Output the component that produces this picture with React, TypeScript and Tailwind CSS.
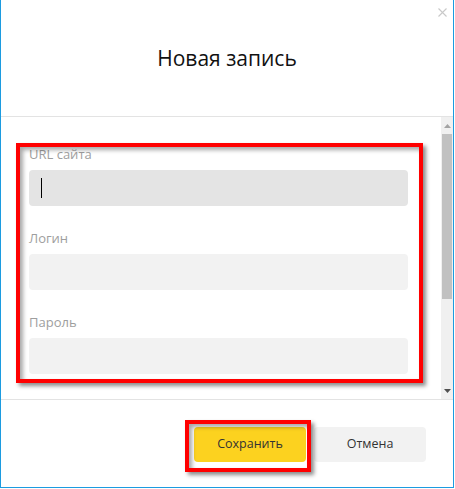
import React from "react";

const font = { fontFamily: '"Open Sans", "Noto Sans", sans-serif' };

function Field({ label, focused }: { label: string; focused?: boolean }) {
  return (
    <div className="flex flex-col">
      <div className="text-[13px] leading-[20px] text-[#9e9e9e] h-[20px]">{label}</div>
      <div
        className={
          "mt-[6px] h-[36px] w-[379px] rounded-[4px] relative " +
          (focused ? "bg-[#e4e4e4]" : "bg-[#f2f2f2]")
        }
      >
        {focused && <div className="absolute left-[12px] top-[8px] w-[1px] h-[20px] bg-black" />}
      </div>
    </div>
  );
}

export default function App() {
  return (
    <div className="relative w-[455px] h-[489px] bg-white" style={font}>
      <div className="w-[454px] h-[488px] border-l border-r border-b border-[#1c9be0] flex flex-col">
        <div className="relative h-[117px] flex items-center justify-center border-b border-[#e3e3e3] shrink-0">
          <div className="text-[21px] text-[#111] leading-none">Новая запись</div>
          <svg className="absolute right-[6px] top-[8px]" width="9" height="9" viewBox="0 0 9 9">
            <path d="M0.5 0.5 L8.5 8.5 M8.5 0.5 L0.5 8.5" stroke="#c9c9c9" strokeWidth="1.1" />
          </svg>
        </div>
        <div className="flex h-[283px] shrink-0 border-b border-[#e3e3e3]">
          <div className="flex-1 overflow-hidden pl-[28px] pt-[27px] flex flex-col gap-[22px]">
            <Field label="URL сайта" focused />
            <Field label="Логин" />
            <Field label="Пароль" />
          </div>
          <div className="w-[12px] bg-[#f0f0f0] flex flex-col">
            <div className="h-[17px] flex items-center justify-center">
              <svg width="7" height="4" viewBox="0 0 7 4">
                <path d="M0 4 L3.5 0 L7 4 Z" fill="#a3a3a3" />
              </svg>
            </div>
            <div className="h-[165px] mx-[1px] bg-[#c1c1c1]" />
            <div className="flex-1" />
            <div className="h-[17px] flex items-center justify-center">
              <svg width="7" height="4" viewBox="0 0 7 4">
                <path d="M0 0 L7 0 L3.5 4 Z" fill="#505050" />
              </svg>
            </div>
          </div>
        </div>
        <div className="flex-1 flex justify-end items-start pt-[27px] pr-[27px] gap-[8px]">
          <button className="w-[112px] h-[35px] rounded-[4px] bg-[#fcd21f] text-[12.5px] text-[#333]">
            Сохранить
          </button>
          <button className="w-[112px] h-[35px] rounded-[4px] bg-[#f2f2f2] text-[12.5px] text-[#333]">
            Отмена
          </button>
        </div>
      </div>
      <div className="absolute left-[16px] top-[143px] w-[407px] h-[240px] border-[4px] border-[#ff0000] shadow-[3px_3px_4px_rgba(0,0,0,0.45),inset_3px_3px_4px_rgba(0,0,0,0.35)]" />
      <div className="absolute left-[185px] top-[420px] w-[126px] h-[52px] border-[4px] border-[#ff0000] shadow-[3px_3px_4px_rgba(0,0,0,0.45),inset_3px_3px_4px_rgba(0,0,0,0.35)]" />
    </div>
  );
}
